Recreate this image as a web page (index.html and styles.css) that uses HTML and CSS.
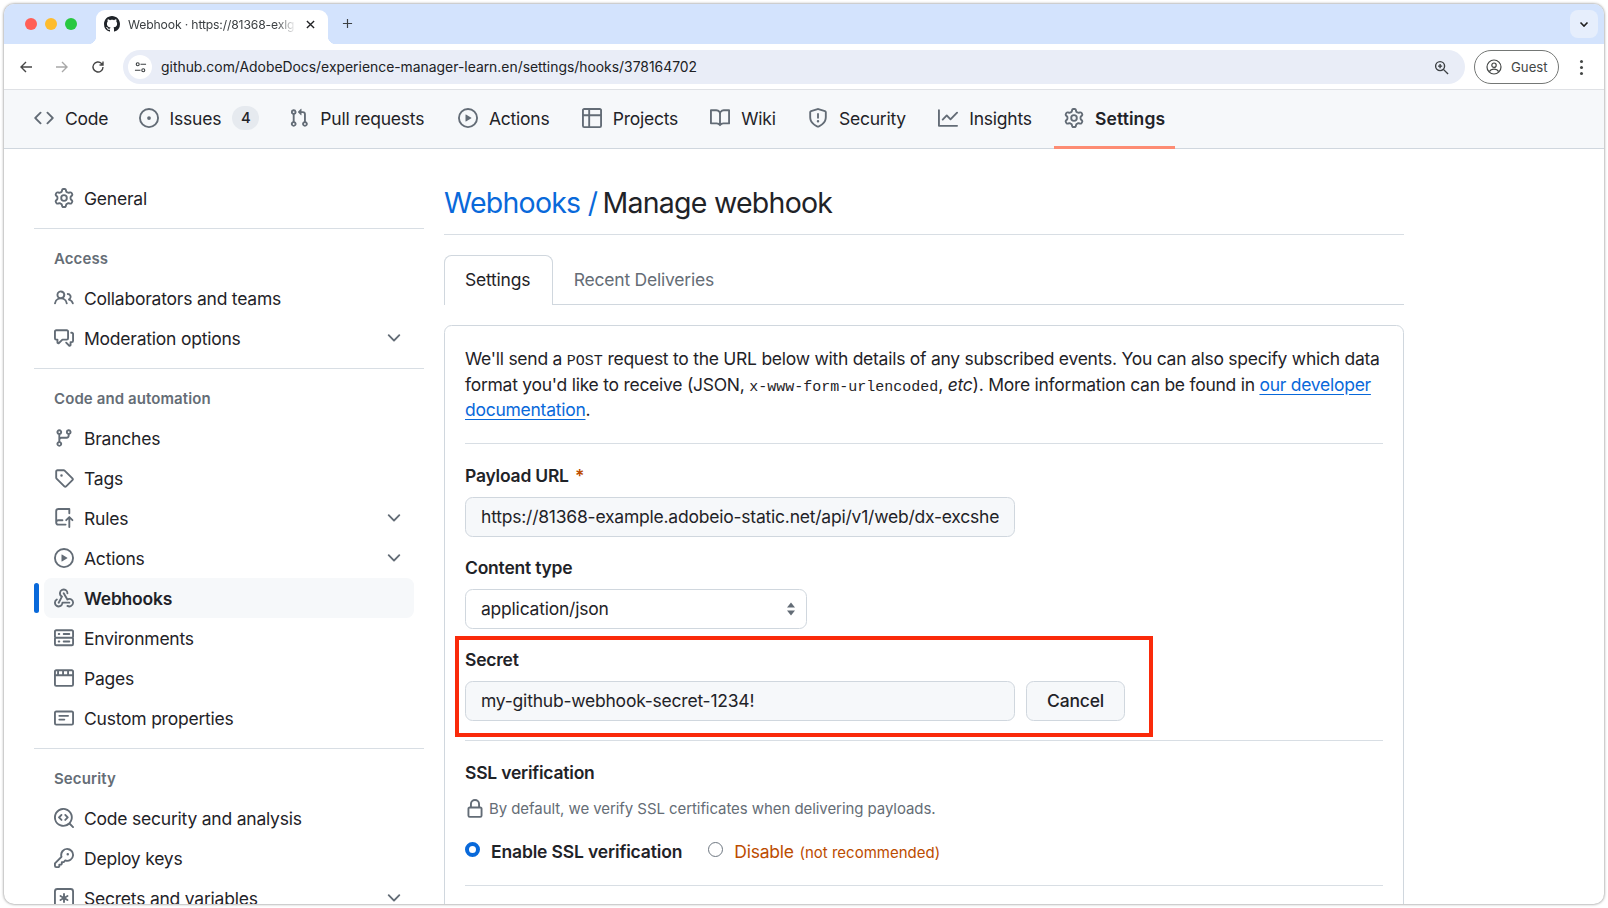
FILE: index.html
```html
<!DOCTYPE html>

<html>

	<head>
		<title>Webhook</title>
		<link rel="stylesheet" href="styles.css">
	</head>

	<body>

		<svg class="sprite" width="0" height="0">
			<symbol id="i-code" viewBox="0 0 16 16"><path d="m11.28 3.22 4.25 4.25a.75.75 0 0 1 0 1.06l-4.25 4.25a.749.749 0 0 1-1.275-.326.749.749 0 0 1 .215-.734L13.94 8l-3.72-3.72a.749.749 0 0 1 .326-1.275.749.749 0 0 1 .734.215Zm-6.56 0a.751.751 0 0 1 1.042.018.751.751 0 0 1 .018 1.042L2.06 8l3.72 3.72a.749.749 0 0 1-.326 1.275.749.749 0 0 1-.734-.215L.47 8.53a.75.75 0 0 1 0-1.06Z"/></symbol>
			<symbol id="i-issue" viewBox="0 0 16 16"><path d="M8 9.5a1.5 1.5 0 1 0 0-3 1.5 1.5 0 0 0 0 3Z"/><path d="M8 0a8 8 0 1 1 0 16A8 8 0 0 1 8 0ZM1.5 8a6.5 6.5 0 1 0 13 0 6.5 6.5 0 0 0-13 0Z"/></symbol>
			<symbol id="i-pull" viewBox="0 0 16 16"><path d="M1.5 3.25a2.25 2.25 0 1 1 3 2.122v5.256a2.251 2.251 0 1 1-1.5 0V5.372A2.25 2.25 0 0 1 1.5 3.25Zm5.677-.177L9.573.677A.25.25 0 0 1 10 .854V2.5h1A2.5 2.5 0 0 1 13.5 5v5.628a2.251 2.251 0 1 1-1.5 0V5a1 1 0 0 0-1-1h-1v1.646a.25.25 0 0 1-.427.177L7.177 3.427a.25.25 0 0 1 0-.354ZM3.75 2.5a.75.75 0 1 0 0 1.5.75.75 0 0 0 0-1.5Zm0 9.5a.75.75 0 1 0 0 1.5.75.75 0 0 0 0-1.5Zm8.25.75a.75.75 0 1 0 1.5 0 .75.75 0 0 0-1.5 0Z"/></symbol>
			<symbol id="i-play" viewBox="0 0 16 16"><path d="M8 0a8 8 0 1 1 0 16A8 8 0 0 1 8 0ZM1.5 8a6.5 6.5 0 1 0 13 0 6.5 6.5 0 0 0-13 0Zm4.879-2.773 4.264 2.559a.25.25 0 0 1 0 .428l-4.264 2.559A.25.25 0 0 1 6 10.559V5.442a.25.25 0 0 1 .379-.215Z"/></symbol>
			<symbol id="i-table" viewBox="0 0 16 16"><path d="M0 1.75C0 .784.784 0 1.75 0h12.5C15.216 0 16 .784 16 1.75v12.5A1.75 1.75 0 0 1 14.25 16H1.75A1.75 1.75 0 0 1 0 14.25ZM6.5 6.5v8h7.75a.25.25 0 0 0 .25-.25V6.5Zm8-1.5V1.75a.25.25 0 0 0-.25-.25H6.5V5Zm-13 1.5v7.75c0 .138.112.25.25.25H5v-8ZM5 5V1.5H1.75a.25.25 0 0 0-.25.25V5Z"/></symbol>
			<symbol id="i-book" viewBox="0 0 16 16"><path d="M0 1.75A.75.75 0 0 1 .75 1h4.253c1.227 0 2.317.59 3 1.501A3.743 3.743 0 0 1 11.006 1h4.245a.75.75 0 0 1 .75.75v10.5a.75.75 0 0 1-.75.75h-4.507a2.25 2.25 0 0 0-1.591.659l-.622.621a.75.75 0 0 1-1.06 0l-.622-.621A2.25 2.25 0 0 0 5.258 13H.75a.75.75 0 0 1-.75-.75Zm7.251 10.324.004-5.073-.002-2.253A2.25 2.25 0 0 0 5.003 2.5H1.5v9h3.757a3.75 3.75 0 0 1 1.994.574ZM8.755 4.75l-.004 7.322a3.752 3.752 0 0 1 1.992-.572H14.5v-9h-3.495a2.25 2.25 0 0 0-2.25 2.25Z"/></symbol>
			<symbol id="i-shield" viewBox="0 0 16 16"><path d="M7.467.133a1.748 1.748 0 0 1 1.066 0l5.25 1.68A1.75 1.75 0 0 1 15 3.48V7c0 1.566-.32 3.182-1.303 4.682-.983 1.498-2.585 2.813-5.032 3.855a1.697 1.697 0 0 1-1.33 0c-2.447-1.042-4.049-2.357-5.032-3.855C1.32 10.182 1 8.566 1 7V3.48a1.75 1.75 0 0 1 1.217-1.667Zm.61 1.429a.25.25 0 0 0-.153 0l-5.25 1.68a.25.25 0 0 0-.174.238V7c0 1.358.275 2.666 1.057 3.86.784 1.194 2.121 2.34 4.366 3.297a.196.196 0 0 0 .154 0c2.245-.956 3.582-2.104 4.366-3.298C13.225 9.666 13.5 8.36 13.5 7V3.48a.251.251 0 0 0-.174-.237l-5.25-1.68ZM8.75 4.75v3a.75.75 0 0 1-1.5 0v-3a.75.75 0 0 1 1.5 0ZM9 10.5a1 1 0 1 1-2 0 1 1 0 0 1 2 0Z"/></symbol>
			<symbol id="i-graph" viewBox="0 0 16 16"><path d="M1.5 1.75V13.5h13.75a.75.75 0 0 1 0 1.5H.75a.75.75 0 0 1-.75-.75V1.75a.75.75 0 0 1 1.5 0Zm14.28 2.53-5.25 5.25a.75.75 0 0 1-1.06 0L7 7.06 4.28 9.78a.751.751 0 0 1-1.042-.018.751.751 0 0 1-.018-1.042l3.25-3.25a.75.75 0 0 1 1.06 0L10 7.94l4.72-4.72a.751.751 0 0 1 1.042.018.751.751 0 0 1 .018 1.042Z"/></symbol>
			<symbol id="i-gear" viewBox="0 0 16 16"><path d="M8 0a8.2 8.2 0 0 1 .701.031C9.444.095 9.99.645 10.16 1.29l.288 1.107c.018.066.079.158.212.224.231.114.454.243.668.386.123.082.233.09.299.071l1.103-.303c.644-.176 1.392.021 1.82.63.27.385.506.792.704 1.218.315.675.111 1.422-.364 1.891l-.814.806c-.049.048-.098.147-.088.294.016.257.016.515 0 .772-.01.147.038.246.088.294l.814.806c.475.469.679 1.216.364 1.891a7.977 7.977 0 0 1-.704 1.217c-.428.61-1.176.807-1.82.63l-1.102-.302c-.067-.019-.177-.011-.3.071a5.909 5.909 0 0 1-.668.386c-.133.066-.194.158-.211.224l-.29 1.106c-.168.646-.715 1.196-1.458 1.26a8.006 8.006 0 0 1-1.402 0c-.743-.064-1.289-.614-1.458-1.26l-.289-1.106c-.018-.066-.079-.158-.212-.224a5.738 5.738 0 0 1-.668-.386c-.123-.082-.233-.09-.299-.071l-1.103.303c-.644.176-1.392-.021-1.82-.63a8.12 8.12 0 0 1-.704-1.218c-.315-.675-.111-1.422.363-1.891l.815-.806c.05-.048.098-.147.088-.294a6.214 6.214 0 0 1 0-.772c.01-.147-.038-.246-.088-.294l-.815-.806C.635 6.045.431 5.298.746 4.623a7.92 7.92 0 0 1 .704-1.217c.428-.61 1.176-.807 1.82-.63l1.102.302c.067.019.177.011.3-.071.214-.143.437-.272.668-.386.133-.066.194-.158.211-.224l.29-1.106C6.009.645 6.556.095 7.299.03 7.53.01 7.764 0 8 0Zm-.571 1.525c-.036.003-.108.036-.137.146l-.289 1.105c-.147.561-.549.967-.998 1.189-.173.086-.34.183-.5.29-.417.278-.97.423-1.529.27l-1.103-.303c-.109-.03-.175.016-.195.045-.22.312-.412.644-.573.99-.014.031-.021.11.059.19l.815.806c.411.406.562.957.53 1.456a4.709 4.709 0 0 0 0 .582c.032.499-.119 1.05-.53 1.456l-.815.806c-.081.08-.073.159-.059.19.162.346.353.677.573.989.02.03.085.076.195.046l1.102-.303c.56-.153 1.113-.008 1.53.27.161.107.328.204.501.29.447.222.85.629.997 1.189l.289 1.105c.029.109.101.143.137.146a6.6 6.6 0 0 0 1.142 0c.036-.003.108-.036.137-.146l.289-1.105c.147-.561.549-.967.998-1.189.173-.086.34-.183.5-.29.417-.278.97-.423 1.529-.27l1.103.303c.109.029.175-.016.195-.045.22-.313.411-.644.573-.99.014-.031.021-.11-.059-.19l-.815-.806c-.411-.406-.562-.957-.53-1.456a4.709 4.709 0 0 0 0-.582c-.032-.499.119-1.05.53-1.456l.815-.806c.081-.08.073-.159.059-.19a6.464 6.464 0 0 0-.573-.989c-.02-.03-.085-.076-.195-.046l-1.102.303c-.56.153-1.113.008-1.53-.27a4.44 4.44 0 0 0-.501-.29c-.447-.222-.85-.629-.997-1.189l-.289-1.105c-.029-.11-.101-.143-.137-.146a6.6 6.6 0 0 0-1.142 0ZM11 8a3 3 0 1 1-6 0 3 3 0 0 1 6 0ZM9.5 8a1.5 1.5 0 1 0-3.001.001A1.5 1.5 0 0 0 9.5 8Z"/></symbol>
			<symbol id="i-people" viewBox="0 0 16 16"><path d="M2 5.5a3.5 3.5 0 1 1 5.898 2.549 5.508 5.508 0 0 1 3.034 4.084.75.75 0 1 1-1.482.235 4 4 0 0 0-7.9 0 .75.75 0 0 1-1.482-.236A5.507 5.507 0 0 1 3.102 8.05 3.493 3.493 0 0 1 2 5.5ZM11 4a3.001 3.001 0 0 1 2.22 5.018 5.01 5.01 0 0 1 2.56 3.012.749.749 0 0 1-.885.954.752.752 0 0 1-.549-.514 3.507 3.507 0 0 0-2.522-2.372.75.75 0 0 1-.574-.73v-.352a.75.75 0 0 1 .416-.672A1.5 1.5 0 0 0 11 5.5.75.75 0 0 1 11 4Zm-5.5-.5a2 2 0 1 0-.001 3.999A2 2 0 0 0 5.5 3.5Z"/></symbol>
			<symbol id="i-comment" viewBox="0 0 16 16"><path d="M1.75 1h8.5c.966 0 1.75.784 1.75 1.75v5.5A1.75 1.75 0 0 1 10.25 10H7.061l-2.574 2.573A1.458 1.458 0 0 1 2 11.543V10h-.25A1.75 1.75 0 0 1 0 8.25v-5.5C0 1.784.784 1 1.75 1ZM1.5 2.75v5.5c0 .138.112.25.25.25h1a.75.75 0 0 1 .75.75v2.19l2.72-2.72a.749.749 0 0 1 .53-.22h3.5a.25.25 0 0 0 .25-.25v-5.5a.25.25 0 0 0-.25-.25h-8.5a.25.25 0 0 0-.25.25Zm13 2a.25.25 0 0 0-.25-.25h-.5a.75.75 0 0 1 0-1.5h.5c.966 0 1.75.784 1.75 1.75v5.5A1.75 1.75 0 0 1 14.25 12H14v1.543a1.458 1.458 0 0 1-2.487 1.03L9.22 12.28a.749.749 0 0 1 .326-1.275.749.749 0 0 1 .734.215l2.22 2.22v-2.19a.75.75 0 0 1 .75-.75h1a.25.25 0 0 0 .25-.25Z"/></symbol>
			<symbol id="i-branch" viewBox="0 0 16 16"><path d="M9.5 3.25a2.25 2.25 0 1 1 3 2.122V6A2.5 2.5 0 0 1 10 8.5H6a1 1 0 0 0-1 1v1.128a2.251 2.251 0 1 1-1.5 0V5.372a2.25 2.25 0 1 1 1.5 0v1.836A2.493 2.493 0 0 1 6 7h4a1 1 0 0 0 1-1v-.628A2.25 2.25 0 0 1 9.5 3.25Zm-6 0a.75.75 0 1 0 1.5 0 .75.75 0 0 0-1.5 0Zm8.25-.75a.75.75 0 1 0 0 1.5.75.75 0 0 0 0-1.5ZM4.25 12a.75.75 0 1 0 0 1.5.75.75 0 0 0 0-1.5Z"/></symbol>
			<symbol id="i-tag" viewBox="0 0 16 16"><path d="M1 7.775V2.75C1 1.784 1.784 1 2.75 1h5.025c.464 0 .91.184 1.238.513l6.25 6.25a1.75 1.75 0 0 1 0 2.474l-5.026 5.026a1.75 1.75 0 0 1-2.474 0l-6.25-6.25A1.752 1.752 0 0 1 1 7.775Zm1.5 0c0 .066.026.13.073.177l6.25 6.25a.25.25 0 0 0 .354 0l5.025-5.025a.25.25 0 0 0 0-.354l-6.25-6.25a.25.25 0 0 0-.177-.073H2.75a.25.25 0 0 0-.25.25ZM6 5a1 1 0 1 1 0 2 1 1 0 0 1 0-2Z"/></symbol>
			<symbol id="i-rules" viewBox="0 0 16 16"><path d="M1 2.5A2.5 2.5 0 0 1 3.5 0h8.75a.75.75 0 0 1 .75.75v3.5a.75.75 0 0 1-1.5 0V1.5h-8a1 1 0 0 0-1 1v6.708A2.486 2.486 0 0 1 3.5 9h3.25a.75.75 0 0 1 0 1.5H3.5a1 1 0 0 0 0 2h5.75a.75.75 0 0 1 0 1.5H3.5A2.5 2.5 0 0 1 1 11.5Zm13.23 7.79h-.001l-1.224-1.224v6.184a.75.75 0 0 1-1.5 0V9.066L10.28 10.29a.75.75 0 0 1-1.06-1.061l2.505-2.504a.75.75 0 0 1 1.06 0L15.29 9.23a.751.751 0 0 1-.018 1.042.751.751 0 0 1-1.042.018Z"/></symbol>
			<symbol id="i-webhook" viewBox="0 0 16 16"><path d="M5.5 4.25a2.25 2.25 0 0 1 4.5 0 .75.75 0 0 0 1.5 0 3.75 3.75 0 1 0-6.14 2.889l-2.272 4.258a.75.75 0 0 0 1.324.706L7 7.25a.75.75 0 0 0-.309-1.015A2.25 2.25 0 0 1 5.5 4.25Z"/><path d="M7.364 3.607a.75.75 0 0 1 1.03.257l2.608 4.349a3.75 3.75 0 1 1-.628 6.785.75.75 0 0 1 .752-1.299 2.25 2.25 0 1 0-.033-3.88.75.75 0 0 1-1.03-.256L7.107 4.636a.75.75 0 0 1 .257-1.03Z"/><path d="M2.9 8.776A.75.75 0 0 1 2.625 9.8 2.25 2.25 0 1 0 6 11.75a.75.75 0 0 1 .75-.751h5.5a.75.75 0 0 1 0 1.5H7.425a3.751 3.751 0 1 1-5.55-3.998.75.75 0 0 1 1.024.274Z"/></symbol>
			<symbol id="i-server" viewBox="0 0 16 16"><path d="M1.75 1h12.5c.966 0 1.75.784 1.75 1.75v4c0 .372-.116.717-.314 1 .198.283.314.628.314 1v4a1.75 1.75 0 0 1-1.75 1.75H1.75A1.75 1.75 0 0 1 0 12.75v-4c0-.372.116-.717.314-1a1.739 1.739 0 0 1-.314-1v-4C0 1.784.784 1 1.75 1ZM1.5 2.75v4c0 .138.112.25.25.25h12.5a.25.25 0 0 0 .25-.25v-4a.25.25 0 0 0-.25-.25H1.75a.25.25 0 0 0-.25.25Zm.25 5.75a.25.25 0 0 0-.25.25v4c0 .138.112.25.25.25h12.5a.25.25 0 0 0 .25-.25v-4a.25.25 0 0 0-.25-.25ZM7 4.75A.75.75 0 0 1 7.75 4h4.5a.75.75 0 0 1 0 1.5h-4.5A.75.75 0 0 1 7 4.75ZM7.75 10h4.5a.75.75 0 0 1 0 1.5h-4.5a.75.75 0 0 1 0-1.5ZM3 4.75A.75.75 0 0 1 3.75 4h.5a.75.75 0 0 1 0 1.5h-.5A.75.75 0 0 1 3 4.75ZM3.75 10h.5a.75.75 0 0 1 0 1.5h-.5a.75.75 0 0 1 0-1.5Z"/></symbol>
			<symbol id="i-browser" viewBox="0 0 16 16"><path d="M0 2.75C0 1.784.784 1 1.75 1h12.5c.966 0 1.75.784 1.75 1.75v10.5A1.75 1.75 0 0 1 14.25 15H1.75A1.75 1.75 0 0 1 0 13.25ZM14.5 6.5h-13v6.75c0 .138.112.25.25.25h12.5a.25.25 0 0 0 .25-.25Zm0-3.75a.25.25 0 0 0-.25-.25H12V5h2.5ZM10.5 2.5H8V5h2.5ZM6.5 2.5H4V5h2.5Zm-4 0h-.75a.25.25 0 0 0-.25.25V5h1Z"/></symbol>
			<symbol id="i-note" viewBox="0 0 16 16"><path d="M0 3.75C0 2.784.784 2 1.75 2h12.5c.966 0 1.75.784 1.75 1.750v8.5A1.75 1.75 0 0 1 14.25 14H1.75A1.75 1.75 0 0 1 0 12.25Zm1.75-.25a.25.25 0 0 0-.25.25v8.5c0 .138.112.25.25.25h12.5a.25.25 0 0 0 .25-.25v-8.5a.25.25 0 0 0-.25-.25ZM3.5 6.25a.75.75 0 0 1 .75-.75h7a.75.75 0 0 1 0 1.5h-7a.75.75 0 0 1-.75-.75Zm.75 2.25h4a.75.75 0 0 1 0 1.5h-4a.75.75 0 0 1 0-1.5Z"/></symbol>
			<symbol id="i-codescan" viewBox="0 0 16 16"><path d="M8.47 4.97a.75.75 0 0 0 0 1.06L9.94 7.5 8.47 8.97a.75.75 0 1 0 1.06 1.06l2-2a.75.75 0 0 0 0-1.06l-2-2a.75.75 0 0 0-1.06 0ZM6.53 6.03a.75.75 0 0 0-1.06-1.06l-2 2a.75.75 0 0 0 0 1.06l2 2a.75.75 0 1 0 1.06-1.06L5.06 7.5l1.47-1.47Z"/><path d="M12.246 13.307a7.501 7.501 0 1 1 1.06-1.06l2.474 2.473a.749.749 0 0 1-.326 1.275.749.749 0 0 1-.734-.215ZM1.5 7.5a6.002 6.002 0 0 0 3.608 5.504 6.002 6.002 0 0 0 6.486-1.117.748.748 0 0 1 .292-.293A6 6 0 1 0 1.5 7.5Z"/></symbol>
			<symbol id="i-key" viewBox="0 0 16 16"><path d="M10.5 0a5.499 5.499 0 1 1-1.288 10.848l-.932.932a.749.749 0 0 1-.53.22H7v.75a.749.749 0 0 1-.22.53l-.5.5a.749.749 0 0 1-.53.22H5v.75a.749.749 0 0 1-.22.53l-.5.5a.749.749 0 0 1-.53.22h-2A1.75 1.75 0 0 1 0 14.25v-2c0-.199.079-.389.22-.53l4.932-4.932A5.5 5.5 0 0 1 10.5 0Zm-4 5.5c-.001.431.069.86.205 1.269a.75.75 0 0 1-.181.768L1.5 12.56v1.69c0 .138.112.25.25.25h1.69l.06-.06v-1.19a.75.75 0 0 1 .75-.75h1.19l.06-.06v-1.19a.75.75 0 0 1 .75-.75h1.19l1.023-1.025a.75.75 0 0 1 .768-.18A4 4 0 1 0 6.5 5.5ZM11 6a1 1 0 1 1 0-2 1 1 0 0 1 0 2Z"/></symbol>
			<symbol id="i-asterisk" viewBox="0 0 16 16"><path d="M0 2.75A2.75 2.75 0 0 1 2.75 0h10.5A2.75 2.75 0 0 1 16 2.75v10.5A2.75 2.75 0 0 1 13.25 16H2.75A2.75 2.75 0 0 1 0 13.25ZM2.75 1.5c-.69 0-1.25.56-1.25 1.25v10.5c0 .69.56 1.25 1.25 1.25h10.5c.69 0 1.25-.56 1.25-1.25V2.75c0-.69-.56-1.25-1.25-1.25Z"/><path d="M8 4a.75.75 0 0 1 .75.75V6.7l1.69-.975a.75.75 0 0 1 .75 1.3L9.5 8l1.69.976a.75.75 0 0 1-.75 1.298L8.75 9.3v1.951a.75.75 0 0 1-1.5 0V9.299l-1.69.976a.75.75 0 0 1-.75-1.3L6.5 8l-1.69-.975a.75.75 0 0 1 .75-1.3l1.69.976V4.75A.75.75 0 0 1 8 4Z"/></symbol>
			<symbol id="i-chevron" viewBox="0 0 16 16"><path d="M12.78 5.22a.749.749 0 0 1 0 1.06l-4.25 4.25a.749.749 0 0 1-1.06 0L3.22 6.28a.749.749 0 1 1 1.06-1.06L8 8.939l3.72-3.719a.749.749 0 0 1 1.06 0Z"/></symbol>
			<symbol id="i-lock" viewBox="0 0 16 16"><path d="M4 4a4 4 0 0 1 8 0v2h.25c.966 0 1.75.784 1.75 1.75v5.5A1.75 1.75 0 0 1 12.25 15h-8.5A1.75 1.75 0 0 1 2 13.25v-5.5C2 6.784 2.784 6 3.75 6H4Zm8.25 3.5h-8.5a.25.25 0 0 0-.25.25v5.5c0 .138.112.25.25.25h8.5a.25.25 0 0 0 .25-.25v-5.5a.25.25 0 0 0-.25-.25ZM10.5 6V4a2.5 2.5 0 1 0-5 0v2Z"/></symbol>
			<symbol id="i-github" viewBox="0 0 16 16"><path d="M8 0c4.42 0 8 3.58 8 8a8.013 8.013 0 0 1-5.45 7.59c-.4.08-.55-.17-.55-.38 0-.27.01-1.13.01-2.2 0-.75-.25-1.23-.54-1.48 1.78-.2 3.65-.88 3.65-3.95 0-.88-.31-1.59-.82-2.15.08-.2.36-1.02-.08-2.12 0 0-.67-.22-2.2.82-.64-.18-1.32-.27-2-.27-.68 0-1.36.09-2 .27-1.53-1.03-2.2-.82-2.2-.82-.44 1.1-.16 1.92-.08 2.12-.51.56-.82 1.28-.82 2.15 0 3.06 1.86 3.75 3.64 3.95-.23.2-.44.55-.51 1.07-.46.21-1.61.55-2.33-.66-.15-.24-.6-.83-1.23-.82-.67.01-.27.38.01.53.34.19.73.9.82 1.13.16.45.68 1.31 2.69.94 0 .67.01 1.3.01 1.49 0 .21-.15.45-.55.37A7.995 7.995 0 0 1 0 8c0-4.42 3.58-8 8-8Z"/></symbol>
		</svg>

		<div class="window">

			<div class="tabstrip">
				<div class="lights">
					<span class="light light-red"></span>
					<span class="light light-yellow"></span>
					<span class="light light-green"></span>
				</div>
				<div class="browser-tab">
					<svg class="tab-favicon"><use href="#i-github"/></svg>
					<span class="tab-title">Webhook · https://81368-exlg</span>
					<svg class="tab-close" viewBox="0 0 10 10"><path d="M1 1l8 8M9 1l-8 8"/></svg>
				</div>
				<svg class="tab-new" viewBox="0 0 12 12"><path d="M6 1v10M1 6h10"/></svg>
				<div class="tab-menu"><svg viewBox="0 0 10 10"><path d="M1.5 3.5 5 7l3.5-3.5"/></svg></div>
			</div>

			<div class="toolbar">
				<svg class="tool-icon" viewBox="0 0 14 14"><path d="M13 7H2M7 2 2 7l5 5"/></svg>
				<svg class="tool-icon tool-off" viewBox="0 0 14 14"><path d="M1 7h11M7 2l5 5-5 5"/></svg>
				<svg class="tool-icon" viewBox="0 0 14 14"><path d="M12 7a5 5 0 1 1-1.5-3.6L12 5M12 1.5V5H8.5"/></svg>
				<div class="omnibox">
					<span class="site-info">
						<svg viewBox="0 0 14 14"><circle cx="4" cy="3.5" r="1.6"/><path d="M7 3.5h6M1 10h6"/><circle cx="10" cy="10" r="1.6"/></svg>
					</span>
					<span class="url">github.com/AdobeDocs/experience-manager-learn.en/settings/hooks/378164702</span>
					<svg class="omni-zoom" viewBox="0 0 16 16"><circle cx="6.5" cy="6.5" r="4.8"/><path d="M10 10l5 5M4.3 6.5h4.4M6.5 4.3v4.4"/></svg>
				</div>
				<div class="guest">
					<svg viewBox="0 0 16 16"><circle cx="8" cy="8" r="7"/><circle cx="8" cy="6.2" r="2.2"/><path d="M3.4 12.6c1-1.8 2.6-2.4 4.6-2.4s3.6.6 4.6 2.4"/></svg>
					<span>Guest</span>
				</div>
				<div class="kebab"><span></span><span></span><span></span></div>
			</div>

			<nav class="repo-nav">
				<a class="repo-link"><svg class="oct"><use href="#i-code"/></svg>Code</a>
				<a class="repo-link"><svg class="oct"><use href="#i-issue"/></svg>Issues<span class="counter">4</span></a>
				<a class="repo-link repo-link-pull"><svg class="oct"><use href="#i-pull"/></svg>Pull requests</a>
				<a class="repo-link"><svg class="oct"><use href="#i-play"/></svg>Actions</a>
				<a class="repo-link"><svg class="oct"><use href="#i-table"/></svg>Projects</a>
				<a class="repo-link"><svg class="oct"><use href="#i-book"/></svg>Wiki</a>
				<a class="repo-link"><svg class="oct"><use href="#i-shield"/></svg>Security</a>
				<a class="repo-link"><svg class="oct"><use href="#i-graph"/></svg>Insights</a>
				<a class="repo-link repo-link-active"><svg class="oct"><use href="#i-gear"/></svg>Settings</a>
			</nav>

			<div class="page">

				<aside class="sidebar">
					<a class="side-item"><svg class="oct"><use href="#i-gear"/></svg>General</a>

					<div class="side-group">
						<h3>Access</h3>
						<a class="side-item"><svg class="oct"><use href="#i-people"/></svg>Collaborators and teams</a>
						<a class="side-item"><svg class="oct"><use href="#i-comment"/></svg>Moderation options<svg class="oct chev"><use href="#i-chevron"/></svg></a>
					</div>

					<div class="side-group">
						<h3>Code and automation</h3>
						<a class="side-item"><svg class="oct"><use href="#i-branch"/></svg>Branches</a>
						<a class="side-item"><svg class="oct"><use href="#i-tag"/></svg>Tags</a>
						<a class="side-item"><svg class="oct"><use href="#i-rules"/></svg>Rules<svg class="oct chev"><use href="#i-chevron"/></svg></a>
						<a class="side-item"><svg class="oct"><use href="#i-play"/></svg>Actions<svg class="oct chev"><use href="#i-chevron"/></svg></a>
						<a class="side-item side-item-active"><svg class="oct"><use href="#i-webhook"/></svg>Webhooks</a>
						<a class="side-item"><svg class="oct"><use href="#i-server"/></svg>Environments</a>
						<a class="side-item"><svg class="oct"><use href="#i-browser"/></svg>Pages</a>
						<a class="side-item"><svg class="oct"><use href="#i-note"/></svg>Custom properties</a>
					</div>

					<div class="side-group">
						<h3>Security</h3>
						<a class="side-item"><svg class="oct"><use href="#i-codescan"/></svg>Code security and analysis</a>
						<a class="side-item"><svg class="oct"><use href="#i-key"/></svg>Deploy keys</a>
						<a class="side-item"><svg class="oct"><use href="#i-asterisk"/></svg>Secrets and variables<svg class="oct chev"><use href="#i-chevron"/></svg></a>
					</div>
				</aside>

				<main class="main">
					<h1 class="title"><a>Webhooks /</a> Manage webhook</h1>

					<div class="tabnav">
						<a class="tabnav-tab tabnav-tab-active">Settings</a>
						<a class="tabnav-tab">Recent Deliveries</a>
					</div>

					<form class="box">
						<p class="intro">We'll send a <code>POST</code> request to the URL below with details of any subscribed events. You can also specify which data format you'd like to receive (JSON, <code>x-www-form-urlencoded</code>, <em>etc</em>). More information can be found in <a>our developer documentation</a>.</p>

						<hr class="rule">

						<div class="field">
							<label>Payload URL <span class="req">*</span></label>
							<input class="control control-wide" type="text" value="https://81368-example.adobeio-static.net/api/v1/web/dx-excshe">
						</div>

						<div class="field">
							<label>Content type</label>
							<span class="select-wrap">
								<select class="control control-select"><option>application/json</option></select>
								<svg class="select-arrows" viewBox="0 0 10 16"><path d="M5 1.5 9 6.5H1ZM5 14.5 1 9.500h8Z"/></svg>
							</span>
						</div>

						<div class="field field-secret">
							<label>Secret</label>
							<div class="secret-row">
								<input class="control control-wide" type="text" value="my-github-webhook-secret-1234!">
								<button class="btn" type="button">Cancel</button>
							</div>
							<div class="callout"></div>
						</div>

						<hr class="rule rule-secret">

						<div class="ssl">
							<label>SSL verification</label>
							<p class="hint"><svg class="oct"><use href="#i-lock"/></svg>By default, we verify SSL certificates when delivering payloads.</p>
							<div class="radios">
								<span class="radio-item"><span class="radio radio-on"></span><strong>Enable SSL verification</strong></span>
								<span class="radio-item radio-item-danger"><span class="radio"></span><span>Disable <small>(not recommended)</small></span></span>
							</div>
						</div>

						<hr class="rule rule-ssl">
					</form>
				</main>

			</div>

		</div>

	</body>

</html>
```

FILE: styles.css
```css
* { box-sizing: border-box; }
html, body { height: 100%; }
body {
	margin: 0;
	background: #fff;
	font-family: Inter, "Liberation Sans", sans-serif;
	font-size: 17.5px;
	letter-spacing: -0.22px;
	color: #1f2328;
	overflow: hidden;
}
.sprite { position: absolute; }
a { color: inherit; text-decoration: none; }

.window {
	margin: 4px 0 0 4px;
	width: 1600px;
	height: 900px;
	border-radius: 10px;
	overflow: hidden;
	background: #fff;
	box-shadow: 0 0 3px rgba(0,0,0,.55);
}

/* browser chrome */
.tabstrip {
	display: flex;
	align-items: flex-start;
	height: 40px;
	background: #d3e3fd;
	position: relative;
}
.lights { display: flex; gap: 8px; margin: 14px 0 0 21px; }
.light { width: 12px; height: 12px; border-radius: 50%; }
.light-red { background: #ff5f57; }
.light-yellow { background: #febc2e; }
.light-green { background: #28c840; }
.browser-tab {
	display: flex;
	align-items: center;
	width: 232px;
	height: 34px;
	margin: 6px 0 0 19px;
	padding: 0 0 6px 8px;
	background: #fff;
	border-radius: 9px 9px 0 0;
	position: relative;
}
.browser-tab::before, .browser-tab::after {
	content: "";
	position: absolute;
	bottom: 0;
	width: 8px;
	height: 8px;
}
.browser-tab::before { left: -8px; background: radial-gradient(circle at 0 0, transparent 8px, #fff 8.5px); }
.browser-tab::after { right: -8px; background: radial-gradient(circle at 100% 0, transparent 8px, #fff 8.5px); }
.tab-favicon { width: 16px; height: 16px; flex: none; fill: #1f2328; }
.tab-title {
	width: 168px;
	margin-left: 8px;
	font-size: 12.2px;
	letter-spacing: -0.15px;
	color: #3c4043;
	white-space: nowrap;
	overflow: hidden;
	-webkit-mask-image: linear-gradient(90deg, #000 88%, transparent);
	mask-image: linear-gradient(90deg, #000 88%, transparent);
}
.tab-close { width: 9px; height: 9px; margin-left: 10px; fill: none; stroke: #202124; stroke-width: 1.5; }
.tab-new { width: 11px; height: 11px; margin: 14px 0 0 14px; fill: none; stroke: #3c4043; stroke-width: 1.3; }
.tab-menu {
	margin: 6px 6px 0 auto;
	width: 28px;
	height: 28px;
	border-radius: 8px;
	background: #e6eefc;
	display: flex;
	align-items: center;
	justify-content: center;
}
.tab-menu svg { width: 10px; height: 10px; fill: none; stroke: #1f1f1f; stroke-width: 1.6; }

.toolbar {
	display: flex;
	align-items: center;
	height: 46px;
	padding-top: 1px;
	background: #fff;
	border-bottom: 1px solid #dfe1e5;
	border-radius: 10px 10px 0 0;
	position: relative;
	letter-spacing: 0;
}
.tool-icon { width: 14px; height: 14px; flex: none; margin-left: 15px; margin-right: 7px; fill: none; stroke: #474747; stroke-width: 1.4; }
.tool-off { stroke: #a8a8a8; }
.omnibox {
	display: flex;
	align-items: center;
	width: 1342px;
	height: 34px;
	margin-left: 11px;
	border-radius: 17px;
	background: #e9edf7;
}
.site-info {
	display: flex;
	align-items: center;
	justify-content: center;
	width: 24px;
	height: 24px;
	margin-left: 5px;
	border-radius: 50%;
	background: #fff;
}
.site-info svg { width: 13px; height: 13px; fill: none; stroke: #3c4043; stroke-width: 1.2; }
.url { margin-left: 9px; font-size: 13.9px; color: #202124; }
.omni-zoom { width: 15px; height: 15px; margin-left: auto; margin-right: 16px; fill: none; stroke: #3c4043; stroke-width: 1.5; }
.guest {
	display: flex;
	align-items: center;
	gap: 9px;
	width: 85px;
	height: 34px;
	margin-left: 9px;
	padding-left: 11px;
	border: 1px solid #747775;
	border-radius: 17px;
	font-size: 13.2px;
	color: #444746;
}
.guest svg { width: 16px; height: 16px; fill: none; stroke: #444746; stroke-width: 1.2; }
.kebab { display: flex; flex-direction: column; gap: 3px; margin-left: 21px; }
.kebab span { width: 3px; height: 3px; border-radius: 50%; background: #444746; }

/* repo nav */
.oct { width: 20px; height: 20px; flex: none; fill: #636c76; }
.repo-nav {
	display: flex;
	height: 59px;
	padding: 0 0 2px 20px;
	gap: 12.2px;
	background: #f6f8fa;
	border-bottom: 1px solid #d0d7de;
}
.repo-link {
	display: flex;
	align-items: center;
	gap: 11px;
	height: 56px;
	padding: 0 10px;
	position: relative;
}
.repo-link:nth-child(-n+2) { margin-right: -2px; }
.repo-link-pull { margin-right: 1.5px; }
.counter {
	display: block;
	min-width: 27px;
	height: 24px;
	border-radius: 12px;
	background: #e6eaef;
	font-size: 14.8px;
	font-weight: 500;
	line-height: 24px;
	text-align: center;
}
.repo-link-active { font-weight: 600; letter-spacing: 0.1px; }
.repo-link-active::after {
	content: "";
	position: absolute;
	left: 0;
	right: 0;
	bottom: -3px;
	height: 3px;
	background: #fd8c73;
}

/* page */
.page { display: flex; gap: 20px; padding: 29px 0 0 30px; }
.sidebar { width: 390px; flex: none; }
.side-item {
	display: flex;
	align-items: center;
	gap: 10px;
	height: 40px;
	margin: 0 10px;
	padding: 0 10px;
	border-radius: 7.5px;
	position: relative;
}
.chev { margin-left: auto; }
.side-item-active { background: #f6f8fa; font-weight: 600; }
.side-item-active::before {
	content: "";
	position: absolute;
	left: -10px;
	top: 5px;
	width: 5px;
	height: 30px;
	border-radius: 3px;
	background: #0969da;
}
.side-group { border-top: 1px solid #d8dee4; margin-top: 10px; }
.side-group h3 {
	margin: 0;
	padding: 20px 0 9px 20px;
	font-size: 15px;
	line-height: 20px;
	font-weight: 600;
	letter-spacing: 0.1px;
	color: #656d76;
}

.main { width: 960px; flex: none; margin-top: 1px; }
.title {
	margin: 0;
	height: 56px;
	padding-top: 5px;
	font-size: 28.5px;
	letter-spacing: -0.75px;
	line-height: 38px;
	font-weight: 400;
	border-bottom: 1px solid #d8dee4;
}
.title a { color: #0969da; margin-right: -2px; }
.tabnav {
	display: flex;
	height: 50px;
	margin-top: 20px;
	border-bottom: 1px solid #d0d7de;
}
.tabnav-tab {
	padding: 0 20px;
	line-height: 48px;
	color: #656d76;
	border: 1px solid transparent;
	border-bottom: 0;
}
.tabnav-tab-active {
	height: 50px;
	padding-right: 21.5px;
	color: #1f2328;
	background: #fff;
	border-color: #d0d7de;
	border-radius: 7.5px 7.5px 0 0;
}

.box {
	margin-top: 20px;
	padding: 20px 20px 0;
	border: 1px solid #d0d7de;
	border-radius: 7.5px;
	height: 700px;
}
.intro { margin: 0; line-height: 25.6px; letter-spacing: -0.26px; }
.intro code { font-family: "Liberation Mono", monospace; font-size: 15px; line-height: 1; letter-spacing: 0; }
.intro a { color: #0969da; text-decoration: underline; text-underline-offset: 3px; }
.rule { margin: 20px 0 0; border: 0; border-top: 1px solid #d8dee4; }
label { display: block; font-weight: 600; line-height: 25px; }
.req { color: #bc4c00; margin-left: 2px; }
.field { margin-top: 19px; }
.field + .field { margin-top: 18px; }
.field label { margin-bottom: 9px; }
.control {
	display: block;
	height: 40px;
	padding: 0 15px;
	font-family: inherit;
	font-size: 17.5px;
	letter-spacing: inherit;
	color: #1f2328;
	background: #f6f8fa;
	border: 1px solid #d0d7de;
	border-radius: 7.5px;
	outline: 0;
}
.control-wide { width: 550px; }
.select-wrap { display: block; width: 342px; position: relative; }
.control-select { width: 100%; background: #fff; appearance: none; -webkit-appearance: none; }
.select-arrows { position: absolute; right: 11px; top: 12px; width: 10px; height: 16px; fill: #636c76; }
.field-secret { position: relative; }
.secret-row { display: flex; gap: 11px; }
.btn {
	width: 99px;
	height: 40px;
	font-family: inherit;
	font-size: 17.5px;
	letter-spacing: inherit;
	font-weight: 500;
	color: #1f2328;
	background: #f6f8fa;
	border: 1px solid #d0d7de;
	border-radius: 7.5px;
}
.callout {
	position: absolute;
	left: -10px;
	top: -11px;
	width: 698px;
	height: 101px;
	border: 4px solid #fa2a0a;
}
.rule-secret { margin-top: 19px; }
.ssl { margin-top: 19px; }
.hint {
	display: flex;
	align-items: center;
	gap: 4px;
	margin: 14px 0 0;
	font-size: 15px;
	letter-spacing: -0.07px;
	color: #656d76;
}
.radios { display: flex; align-items: center; gap: 26px; margin-top: 22px; }
.radio-item { display: flex; align-items: center; gap: 11px; }
.radio-item strong { font-weight: 600; letter-spacing: -0.15px; }
.radio {
	display: block;
	width: 15px;
	height: 15px;
	margin-top: -3px;
	border: 1px solid #6e7781;
	border-radius: 50%;
	background: #fff;
}
.radio-on { border: 4px solid #0969da; }
.radio-item-danger { color: #bc4c00; }
.radio-item-danger small { font-size: 15px; margin-left: 1px; letter-spacing: 0; }
.rule-ssl { margin-top: 23px; }
```
